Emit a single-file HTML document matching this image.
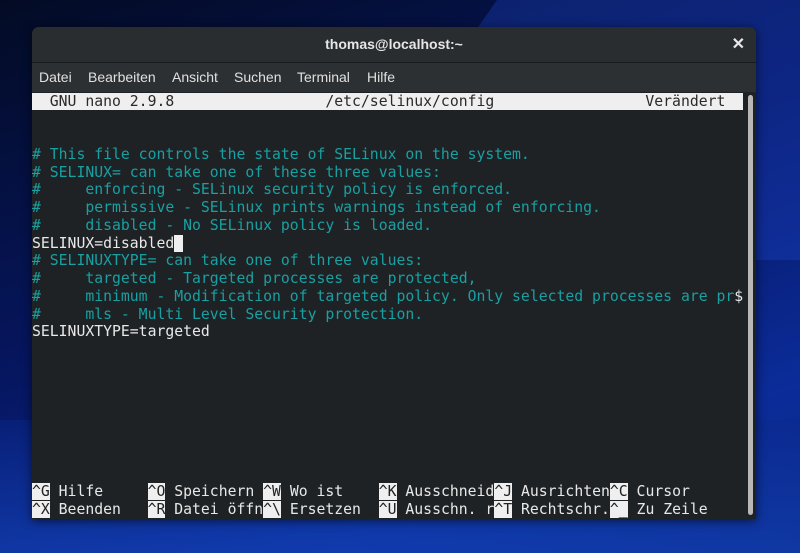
<!DOCTYPE html>
<html><head><meta charset="utf-8"><style>
html,body{margin:0;padding:0;width:800px;height:553px;overflow:hidden;}
body{position:relative;font-family:"Liberation Sans",sans-serif;}
.bg1{position:absolute;left:0;top:0;width:800px;height:553px;background:linear-gradient(160deg,#030b24 0%,#061660 45%,#0b2c99 80%,#0a2680 100%);}
.bg2{position:absolute;left:420px;top:-40px;width:500px;height:300px;background:rgba(30,70,200,.35);transform:skewX(-35deg);}
.bg3{position:absolute;left:0;top:420px;width:800px;height:140px;background:linear-gradient(180deg,rgba(10,40,140,.4),rgba(20,70,190,.6));}
.win{position:absolute;left:32px;top:27px;width:724px;height:492px;background:#1f2225;border-radius:7px 7px 0 0;overflow:hidden;box-shadow:0 2px 10px rgba(0,0,0,.6);}
.title{position:absolute;left:0;top:0;width:724px;height:35px;background:#2a2d30;border-bottom:1px solid #1a1c1e;color:#e6e6e6;font-weight:bold;font-size:14px;text-align:center;line-height:35px;}
.close{position:absolute;right:11px;top:0;color:#e8e8e8;font-size:16px;font-weight:bold;}
.menu{position:absolute;left:0;top:36px;width:724px;height:29px;background:#2d3033;color:#e0e0e0;font-size:14px;line-height:28px;}
.menu span{position:absolute;top:0;}
.term{position:absolute;left:0;top:65.5px;}
pre{margin:0;font-family:"DejaVu Sans Mono",monospace;font-size:14.77px;line-height:17.75px;color:#e8e8e8;white-space:pre;}
.c{color:#18a0a2;}
.bar{background:#efefef;color:#2a2a2a;display:inline-block;width:711px;}
.k{background:#efefef;color:#222;}
.cur{background:#efefef;}
.sb{position:absolute;left:716px;top:68px;width:5px;height:420px;background:#b8b8b8;border-radius:3px;}
</style></head><body>
<div class="bg1"></div><div class="bg2"></div><div class="bg3"></div>
<div class="win">
<div class="title">thomas@localhost:~<span class="close">✕</span></div>
<div class="menu"><span style="left:7px">Datei</span><span style="left:56px">Bearbeiten</span><span style="left:140px">Ansicht</span><span style="left:202px">Suchen</span><span style="left:265px">Terminal</span><span style="left:335px">Hilfe</span></div>
<div class="term"><pre><span class="bar">  GNU nano 2.9.8                 /etc/selinux/config                 Verändert </span>


<span class="c"># This file controls the state of SELinux on the system.
# SELINUX= can take one of these three values:
#     enforcing - SELinux security policy is enforced.
#     permissive - SELinux prints warnings instead of enforcing.
#     disabled - No SELinux policy is loaded.</span>
SELINUX=disabled<span class="cur"> </span>
<span class="c"># SELINUXTYPE= can take one of three values:
#     targeted - Targeted processes are protected,
#     minimum - Modification of targeted policy. Only selected processes are pr</span>$
<span class="c">#     mls - Multi Level Security protection.</span>
SELINUXTYPE=targeted








<span class="k">^G</span> Hilfe     <span class="k">^O</span> Speichern <span class="k">^W</span> Wo ist    <span class="k">^K</span> Ausschneid<span class="k">^J</span> Ausrichten<span class="k">^C</span> Cursor
<span class="k">^X</span> Beenden   <span class="k">^R</span> Datei öffn<span class="k">^\</span> Ersetzen  <span class="k">^U</span> Ausschn. r<span class="k">^T</span> Rechtschr.<span class="k">^_</span> Zu Zeile</pre></div>
<div class="sb"></div>
</div>
</body></html>
